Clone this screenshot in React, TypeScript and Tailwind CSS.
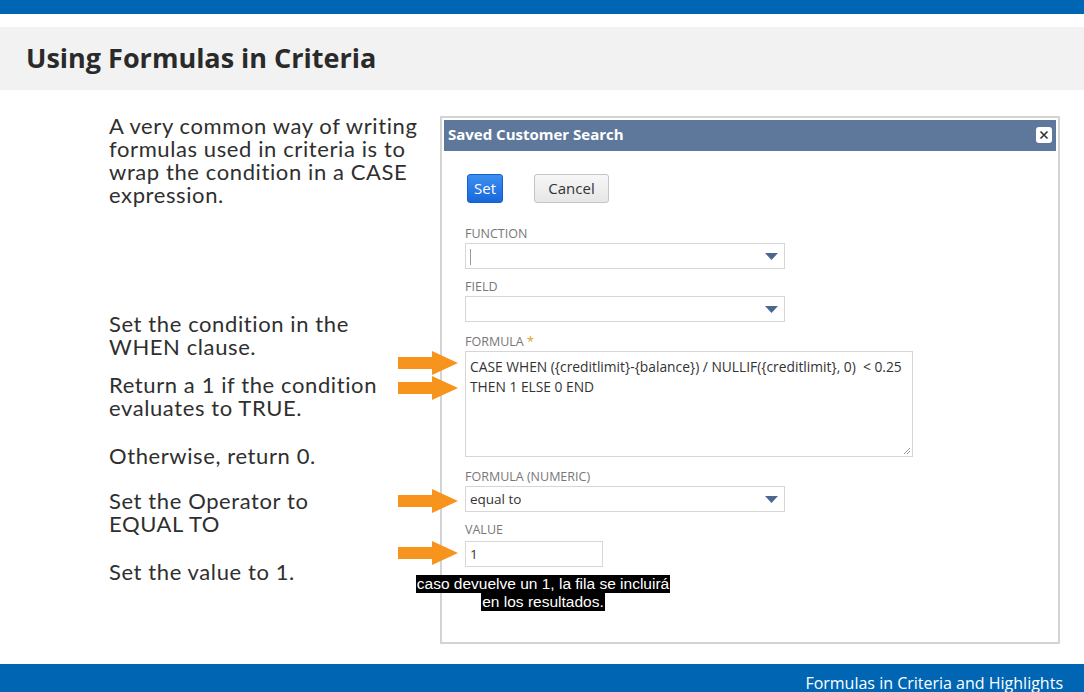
import React from "react";

const proxima = { fontFamily: "Lato, 'Open Sans', sans-serif" };
const ui = { fontFamily: "'Open Sans', 'Noto Sans', sans-serif" };

function Arrow({ top }: { top: number }) {
  return (
    <svg
      className="absolute left-[398px]"
      style={{ top }}
      width="60"
      height="24"
      viewBox="0 0 60 24"
    >
      <rect x="0" y="6" width="38" height="12" fill="#f7941d" />
      <polygon points="34,0 60,12 34,24" fill="#f7941d" />
    </svg>
  );
}

function Caret() {
  return (
    <svg width="13" height="7" viewBox="0 0 13 7" className="mr-[6px]">
      <polygon points="0,0 13,0 6.5,7" fill="#4a6790" />
    </svg>
  );
}

function Label({ children, className = "" }: { children: React.ReactNode; className?: string }) {
  return (
    <div className={`text-[12.5px] leading-[16px] text-[#777] ${className}`}>{children}</div>
  );
}

function Select({ children, className = "" }: { children?: React.ReactNode; className?: string }) {
  return (
    <div
      className={`flex items-center justify-between w-[320px] h-[26px] border border-[#d6d6d6] bg-white pl-[4px] text-[13.5px] text-[#333] ${className}`}
    >
      <span>{children}</span>
      <Caret />
    </div>
  );
}

const leftBlocks: { text: string[]; mt: number }[] = [
  { text: ["A very common way of writing", "formulas used in criteria is to", "wrap the condition in a CASE", "expression."], mt: 24 },
  { text: ["Set the condition in the", "WHEN clause."], mt: 106 },
  { text: ["Return a 1 if the condition", "evaluates to TRUE."], mt: 15 },
  { text: ["Otherwise, return 0."], mt: 25 },
  { text: ["Set the Operator to", "EQUAL TO"], mt: 22 },
  { text: ["Set the value to 1."], mt: 25 },
];

export default function App() {
  return (
    <div className="w-[1084px] h-[692px] bg-white overflow-hidden flex flex-col relative">
      <div className="h-[14px] shrink-0 bg-[#0066b3]" />
      <div className="h-[13px] shrink-0 bg-white" />
      <div className="h-[63px] shrink-0 bg-[#f2f2f2] flex items-center pl-[26px]">
        <h1 className="text-[27px] font-bold text-[#2a2a2a]" style={ui}>
          Using Formulas in Criteria
        </h1>
      </div>

      <div className="relative flex h-[574px] shrink-0">
        <div
          className="w-[440px] pl-[109px] text-[22px] leading-[23px] tracking-[0.6px] text-[#2f2f2f]"
          style={proxima}
        >
          {leftBlocks.map((b, i) => (
            <div key={i} style={{ marginTop: b.mt }}>
              {b.text.map((t) => (
                <div key={t}>{t}</div>
              ))}
            </div>
          ))}
        </div>

        <div
          className="mt-[26px] w-[620px] h-[528px] border-2 border-[#d3d3d3] p-[2px] bg-white"
          style={ui}
        >
          <div className="h-[31px] bg-[#5e789c] flex items-center justify-between pl-[4px] pr-[4px] pb-[2px]">
            <span className="text-white font-bold text-[15px]">Saved Customer Search</span>
            <div className="w-[16px] h-[16px] bg-white rounded-[3px] flex items-center justify-center">
              <svg width="10" height="10" viewBox="0 0 10 10">
                <path d="M1.5 1.5 L8.5 8.5 M8.5 1.5 L1.5 8.5" stroke="#333" strokeWidth="1.6" />
              </svg>
            </div>
          </div>

          <div className="pl-[21px]">
            <div className="flex gap-[31px] mt-[23px] pl-[2px]">
              <button className="h-[29px] w-[36px] rounded-[3px] bg-gradient-to-b from-[#3d8ef0] to-[#1668dc] border border-[#1560c8] text-white text-[15px]">
                Set
              </button>
              <button className="h-[29px] w-[75px] rounded-[3px] bg-gradient-to-b from-[#f7f7f7] to-[#e6e6e6] border border-[#c4c4c4] text-[#333] text-[15px]">
                Cancel
              </button>
            </div>

            <Label className="mt-[23px] mb-[1px]">FUNCTION</Label>
            <Select>
              <span className="inline-block w-[1px] h-[16px] bg-[#999] align-middle" />
            </Select>

            <Label className="mt-[10px] mb-[1px]">FIELD</Label>
            <Select />

            <Label className="mt-[12px] mb-[1px]">
              FORMULA <span className="text-[#e0a020]">*</span>
            </Label>
            <div className="relative w-[448px] h-[106px] border border-[#d6d6d6] pl-[4px] pt-[5px] text-[13.8px] leading-[20px] text-[#333]">
              <div>CASE WHEN ({"{"}creditlimit{"}"}-{"{"}balance{"}"}) / NULLIF({"{"}creditlimit{"}"}, 0)&nbsp; &lt; 0.25</div>
              <div>THEN 1 ELSE 0 END</div>
              <svg className="absolute right-[1px] bottom-[1px]" width="9" height="9" viewBox="0 0 9 9">
                <path d="M8 2 L2 8 M8 5 L5 8" stroke="#999" strokeWidth="1" />
              </svg>
            </div>

            <Label className="mt-[12px] mb-[1px]">FORMULA (NUMERIC)</Label>
            <Select>equal to</Select>

            <Label className="mt-[10px] mb-[3px]">VALUE</Label>
            <div className="w-[138px] h-[26px] border border-[#d6d6d6] pl-[4px] text-[13.5px] text-[#333] flex items-center">
              1
            </div>
          </div>
        </div>

        <Arrow top={261} />
        <Arrow top={286} />
        <Arrow top={399} />
        <Arrow top={451} />

        <div
          className="absolute left-[386px] top-[485px] w-[314px] flex flex-col items-center text-[15.5px] leading-[18px] text-white"
          style={{ fontFamily: "'Liberation Sans', Arial, sans-serif" }}
        >
          <span className="bg-black px-[1px]">caso devuelve un 1, la fila se incluirá</span>
          <span className="bg-black px-[1px]">en los resultados.</span>
        </div>
      </div>

      <div className="h-[28px] shrink-0 bg-[#0066b3] flex items-center justify-end pr-[21px] pt-[11px]">
        <span className="text-white text-[16px] leading-[17px]" style={ui}>
          Formulas in Criteria and Highlights
        </span>
      </div>
    </div>
  );
}
